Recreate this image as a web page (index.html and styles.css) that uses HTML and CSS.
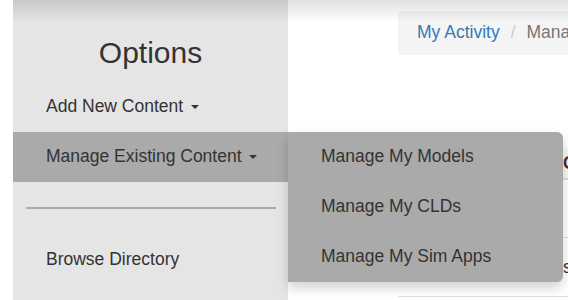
FILE: index.html
```html
<!DOCTYPE html>
<html>
<head>
<meta charset="utf-8">
<link rel="stylesheet" href="styles.css">
</head>
<body>
<div class="page">
  <aside class="sidebar">
    <h2 class="title">Options</h2>
    <ul class="nav">
      <li class="nav-item">Add New Content <span class="caret"></span></li>
      <li class="nav-item active">Manage Existing Content <span class="caret"></span>
        <ul class="dropdown">
          <li class="drop-item">Manage My Models</li>
          <li class="drop-item">Manage My CLDs</li>
          <li class="drop-item">Manage My Sim Apps</li>
        </ul>
      </li>
    </ul>
    <hr class="divider">
    <ul class="nav">
      <li class="nav-item browse">Browse Directory</li>
    </ul>
  </aside>
  <main class="main">
    <ol class="breadcrumb">
      <li class="crumb-link">My Activity</li>
      <li class="crumb-sep">/</li>
      <li class="crumb-current">Manage My Models</li>
    </ol>
    <div class="table">
      <div class="row head">
        <div class="cell first">Name</div>
        <div class="cell">Group</div>
      </div>
      <div class="row">
        <div class="cell first"></div>
        <div class="cell"></div>
      </div>
      <div class="row tall">
        <div class="cell first"></div>
        <div class="cell">s</div>
      </div>
    </div>
  </main>
  <div class="top-shadow"></div>
</div>
</body>
</html>
```
FILE: styles.css
```css
* { box-sizing: border-box; }
html, body { margin: 0; padding: 0; }
body {
  width: 568px;
  height: 300px;
  overflow: hidden;
  background: #fff;
  font-family: "Liberation Sans", Arial, sans-serif;
  color: #333;
}
.page {
  position: relative;
  display: flex;
  padding-left: 13px;
  height: 300px;
}
.sidebar {
  flex: 0 0 275px;
  background: #e5e5e5;
  padding-top: 36px;
  position: relative;
  z-index: 2;
}
.title {
  margin: 0 0 13px;
  font-size: 30px;
  font-weight: normal;
  line-height: 33px;
  text-align: center;
  color: #333;
}
.nav {
  list-style: none;
  margin: 0;
  padding: 0;
}
.nav-item {
  position: relative;
  height: 50px;
  line-height: 48px;
  padding-left: 33px;
  font-size: 17.5px;
  color: #333;
  white-space: nowrap;
}
.nav-item.browse { line-height: 50px; }
.nav-item.active { background: #aaa; }
.caret {
  display: inline-block;
  width: 0;
  height: 0;
  margin-left: 3px;
  vertical-align: middle;
  border-top: 4px solid #333;
  border-left: 4px solid transparent;
  border-right: 4px solid transparent;
}
.dropdown {
  position: absolute;
  left: 100%;
  top: 0;
  width: 275px;
  list-style: none;
  margin: 0;
  padding: 0;
  background: #aaa;
  border-radius: 0 6px 6px 0;
  box-shadow: 0 6px 12px rgba(0, 0, 0, 0.175);
  z-index: 5;
}
.drop-item {
  height: 50px;
  line-height: 48px;
  padding-left: 33px;
  font-size: 17.5px;
  color: #333;
}
.divider {
  margin: 25px 12px 25px 13px;
  border: 0;
  height: 2px;
  background: #aaa;
}
.main {
  flex: 0 0 auto;
  width: 700px;
  padding: 11px 0 0 110px;
}
.breadcrumb {
  display: flex;
  list-style: none;
  margin: 0;
  padding: 0 19px;
  height: 44px;
  line-height: 43px;
  background: #f4f4f4;
  border-radius: 4px;
  font-size: 17.5px;
  white-space: nowrap;
}
.crumb-link { color: #337ab7; }
.crumb-sep { color: #ccc; padding: 0 11px; }
.crumb-current { color: #777; }
.table {
  margin-top: 93px;
  font-size: 17.5px;
}
.row {
  display: flex;
  height: 57px;
  border-top: 1px solid #ddd;
  align-items: center;
}
.row.head {
  height: 32px;
  border-top: 0;
  border-bottom: 2px solid #ddd;
  background: #f7f7f7;
  font-weight: bold;
  color: #5a2a20;
}
.row.head + .row { border-top: 0; }
.row.tall {
  height: 60px;
  border-bottom: 1px solid #ddd;
}
.cell {
  padding: 0 8px 0 0;
}
.cell.first { flex: 0 0 165px; }
.top-shadow {
  position: absolute;
  top: 0;
  left: 13px;
  right: 0;
  height: 22px;
  background: linear-gradient(rgba(0, 0, 0, 0.12), rgba(0, 0, 0, 0));
  z-index: 10;
  pointer-events: none;
}
```
